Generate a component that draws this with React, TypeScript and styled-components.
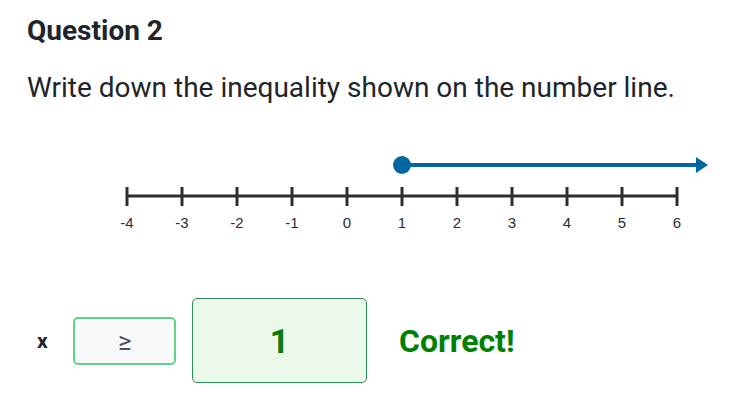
import React, { FC } from 'react';
import styled, { createGlobalStyle } from 'styled-components';

const GlobalStyle = createGlobalStyle`
  html, body {
    margin: 0;
    padding: 0;
    background: #ffffff;
  }
  body {
    font-family: Roboto, 'Liberation Sans', sans-serif;
    color: #212529;
  }
`;

const Page = styled.div`
  width: 732px;
  height: 416px;
  box-sizing: border-box;
  padding: 14px 27px 0;
`;

const Heading = styled.h2`
  margin: 0;
  font-size: 28px;
  line-height: 34px;
  font-weight: 700;
  color: #212529;
`;

const Prompt = styled.p`
  margin: 23px 0 0;
  font-size: 28px;
  line-height: 34px;
  font-weight: 400;
  color: #212529;
`;

const LineWrap = styled.div`
  margin: 41px 0 0 46px;
  height: 100px;
`;

const AnswerRow = styled.div`
  display: flex;
  align-items: center;
  margin-top: 52px;
`;

const Variable = styled.span`
  width: 36px;
  padding-left: 10px;
  font-size: 21px;
  font-weight: 700;
  color: #212529;
`;

const Box = styled.div<{ $big?: boolean }>`
  box-sizing: border-box;
  display: flex;
  align-items: center;
  justify-content: center;
  border-radius: 5px;
  width: ${(p) => (p.$big ? '175px' : '103px')};
  height: ${(p) => (p.$big ? '85px' : '48px')};
  margin-right: ${(p) => (p.$big ? '32px' : '16px')};
  background: ${(p) => (p.$big ? '#eaf9ea' : '#f8f9fb')};
  border: ${(p) => (p.$big ? '1.5px solid #2f8c57' : '2px solid #5fd389')};
  color: ${(p) => (p.$big ? '#0a7a0a' : '#4b5160')};
  font-size: ${(p) => (p.$big ? '34px' : '26px')};
  font-weight: ${(p) => (p.$big ? 700 : 400)};
`;

const Feedback = styled.span`
  font-size: 32px;
  font-weight: 700;
  color: #008000;
`;

const ticks = [-4, -3, -2, -1, 0, 1, 2, 3, 4, 5, 6];

const NumberLine: FC = () => {
  const x0 = 54;
  const step = 55;
  const axisY = 50;
  const rayY = 19;
  const sx = (v: number) => x0 + (v + 4) * step;
  return (
    <svg width="650" height="100" viewBox="0 0 650 100">
      <line x1={sx(-4)} y1={axisY} x2={sx(6)} y2={axisY} stroke="#2b2e33" strokeWidth="3" />
      {ticks.map((t) => (
        <g key={t}>
          <line x1={sx(t)} y1={axisY - 9} x2={sx(t)} y2={axisY + 10} stroke="#2b2e33" strokeWidth="3" />
          <text
            x={sx(t)}
            y={axisY + 32}
            textAnchor="middle"
            fontFamily="'Liberation Sans', Arial, sans-serif"
            fontSize="15"
            fill="#2b2e33"
          >
            {t}
          </text>
        </g>
      ))}
      <line x1={sx(1)} y1={rayY} x2={sx(6) + 22} y2={rayY} stroke="#0068a1" strokeWidth="4" />
      <polygon points={`${sx(6) + 19},${rayY - 8} ${sx(6) + 31},${rayY} ${sx(6) + 19},${rayY + 8}`} fill="#0068a1" />
      <circle cx={sx(1)} cy={rayY} r="9" fill="#0068a1" />
    </svg>
  );
};

export default function App() {
  return (
    <>
      <GlobalStyle />
      <Page>
        <Heading>Question 2</Heading>
        <Prompt>Write down the inequality shown on the number line.</Prompt>
        <LineWrap>
          <NumberLine />
        </LineWrap>
        <AnswerRow>
          <Variable>x</Variable>
          <Box>≥</Box>
          <Box $big>1</Box>
          <Feedback>Correct!</Feedback>
        </AnswerRow>
      </Page>
    </>
  );
}
